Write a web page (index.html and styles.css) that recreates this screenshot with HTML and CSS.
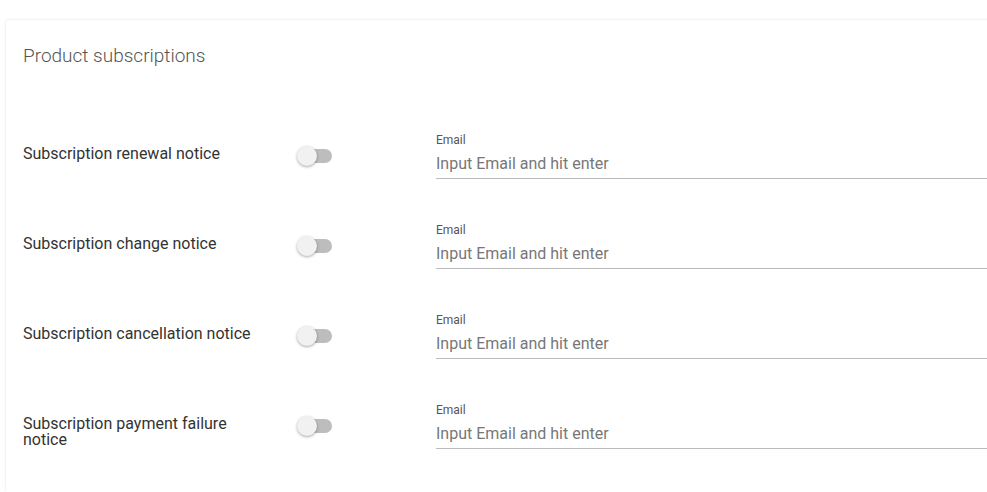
FILE: index.html
```html
<!DOCTYPE html>
<html lang="en">
<head>
    <meta charset="UTF-8">
    <meta name="viewport" content="width=device-width, initial-scale=1.0">
    <title>Notifications</title>
    <link rel="stylesheet" href="styles.css">
</head>
<body>

<div class="card">
    <h2 class="card-title">Product subscriptions</h2>

    <div class="rows">
        <div class="row">
            <span class="row-label">Subscription renewal notice</span>
            <label class="switch"><input type="checkbox"><span class="track"></span><span class="thumb"></span></label>
            <div class="field">
                <label class="field-label">Email</label>
                <input type="email" placeholder="Input Email and hit enter">
            </div>
        </div>

        <div class="row">
            <span class="row-label">Subscription change notice</span>
            <label class="switch"><input type="checkbox"><span class="track"></span><span class="thumb"></span></label>
            <div class="field">
                <label class="field-label">Email</label>
                <input type="email" placeholder="Input Email and hit enter">
            </div>
        </div>

        <div class="row">
            <span class="row-label">Subscription cancellation notice</span>
            <label class="switch"><input type="checkbox"><span class="track"></span><span class="thumb"></span></label>
            <div class="field">
                <label class="field-label">Email</label>
                <input type="email" placeholder="Input Email and hit enter">
            </div>
        </div>

        <div class="row">
            <span class="row-label">Subscription payment failure notice</span>
            <label class="switch"><input type="checkbox"><span class="track"></span><span class="thumb"></span></label>
            <div class="field">
                <label class="field-label">Email</label>
                <input type="email" placeholder="Input Email and hit enter">
            </div>
        </div>
    </div>
</div>

</body>
</html>
```

FILE: styles.css
```css
body {
    font-family: Roboto, "Liberation Sans", sans-serif;
    background-color: #fff;
    margin: 0;
    padding: 0;
    overflow: hidden;
}

.card {
    background-color: #fff;
    margin: 20px -20px 0 6px;
    padding: 24px 20px 42px 17px;
    box-shadow: 0 0 3px rgba(0, 0, 0, 0.12);
    border-radius: 2px;
}

.card-title {
    margin: 0;
    font-size: 19px;
    font-weight: 300;
    line-height: 24px;
    color: #555;
}

.rows {
    margin-top: 64px;
    display: flex;
    flex-direction: column;
    gap: 43px;
}

.row {
    display: grid;
    grid-template-columns: 274px 139px 1fr;
    align-items: start;
}

.row-label {
    margin-top: 14px;
    max-width: 240px;
    font-size: 16px;
    line-height: 16px;
    color: #333;
}

.switch {
    position: relative;
    display: block;
    width: 36px;
    height: 20px;
    margin-top: 14px;
    cursor: pointer;
}

.switch input {
    display: none;
}

.switch .track {
    position: absolute;
    left: 1px;
    top: 3px;
    width: 34px;
    height: 14px;
    border-radius: 7px;
    background-color: #bdbdbd;
}

.switch .thumb {
    position: absolute;
    left: 0;
    top: 0;
    width: 20px;
    height: 20px;
    border-radius: 50%;
    background-color: #f1f1f1;
    box-shadow: 0 1px 3px rgba(0, 0, 0, 0.35);
}

.field {
    display: flex;
    flex-direction: column;
}

.field-label {
    font-size: 12px;
    line-height: 16px;
    color: #555;
}

.field input {
    font-family: inherit;
    font-size: 16px;
    height: 30px;
    padding: 0;
    border: none;
    border-bottom: 1px solid #bbb;
    outline: none;
    color: #333;
    background: transparent;
}

.field input::placeholder {
    color: #777;
}
```
